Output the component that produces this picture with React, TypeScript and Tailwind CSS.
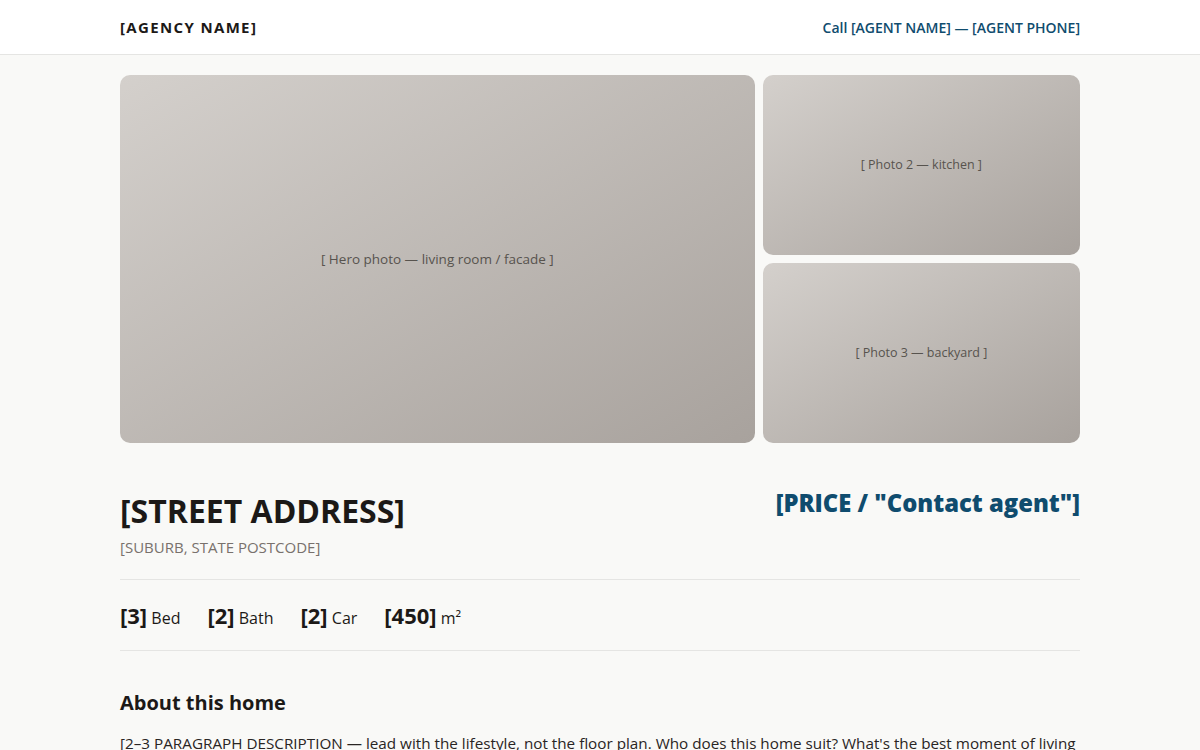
export default function App() {
  return (
    <div className="min-h-screen bg-[#f9f9f7] text-[#1c1917] font-['Open_Sans','Noto_Sans',sans-serif]">
      <header className="bg-white border-b border-[#e5e5e3]">
        <div className="mx-auto w-[960px] h-[54px] flex items-center justify-between">
          <div className="text-[15px] font-bold tracking-[0.09em]">[AGENCY NAME]</div>
          <div className="text-[14px] font-semibold text-[#0f4c6e]">Call [AGENT NAME] — [AGENT PHONE]</div>
        </div>
      </header>

      <main className="mx-auto w-[960px]">
        <section className="mt-5 grid grid-cols-[2fr_1fr] grid-rows-[180px_180px] gap-2">
          <div className="row-span-2 rounded-[10px] bg-gradient-to-br from-[#d4d0cc] to-[#a8a29d] flex items-center justify-center">
            <span className="text-[13.5px] text-[#57534e]">[ Hero photo — living room / facade ]</span>
          </div>
          <div className="rounded-[10px] bg-gradient-to-br from-[#d4d0cc] to-[#a8a29d] flex items-center justify-center">
            <span className="text-[12.5px] text-[#57534e]">[ Photo 2 — kitchen ]</span>
          </div>
          <div className="rounded-[10px] bg-gradient-to-br from-[#d4d0cc] to-[#a8a29d] flex items-center justify-center">
            <span className="text-[12.5px] text-[#57534e]">[ Photo 3 — backyard ]</span>
          </div>
        </section>

        <section className="mt-[44px] flex justify-between items-start pb-[21px] border-b border-[#e5e5e3]">
          <div>
            <h1 className="text-[32px] font-bold leading-[48px]">[STREET ADDRESS]</h1>
            <p className="text-[15px] text-[#78716c] mt-[1px] leading-[22px]">[SUBURB, STATE POSTCODE]</p>
          </div>
          <div className="text-[23.8px] font-extrabold text-[#0f4c6e] leading-[32px]">[PRICE / "Contact agent"]</div>
        </section>

        <section className="flex items-baseline gap-[27px] h-[71px] pt-[20px] border-b border-[#e5e5e3]">
          <div><span className="text-[22px] font-bold leading-[30px]">[3]</span> <span className="text-[16px]">Bed</span></div>
          <div><span className="text-[22px] font-bold leading-[30px]">[2]</span> <span className="text-[16px]">Bath</span></div>
          <div><span className="text-[22px] font-bold leading-[30px]">[2]</span> <span className="text-[16px]">Car</span></div>
          <div><span className="text-[22px] font-bold leading-[30px]">[450]</span> <span className="text-[16px]">m²</span></div>
        </section>

        <section className="mt-[37px]">
          <h2 className="text-[20px] font-bold leading-[30px]">About this home</h2>
          <p className="mt-[12px] text-[15.25px] leading-[26px] text-[#292524]">
            [2–3 PARAGRAPH DESCRIPTION — lead with the lifestyle, not the floor plan. Who does this home suit? What's the best moment of living here? Keep it honest, warm and specific.]
          </p>
        </section>
      </main>
    </div>
  )
}
